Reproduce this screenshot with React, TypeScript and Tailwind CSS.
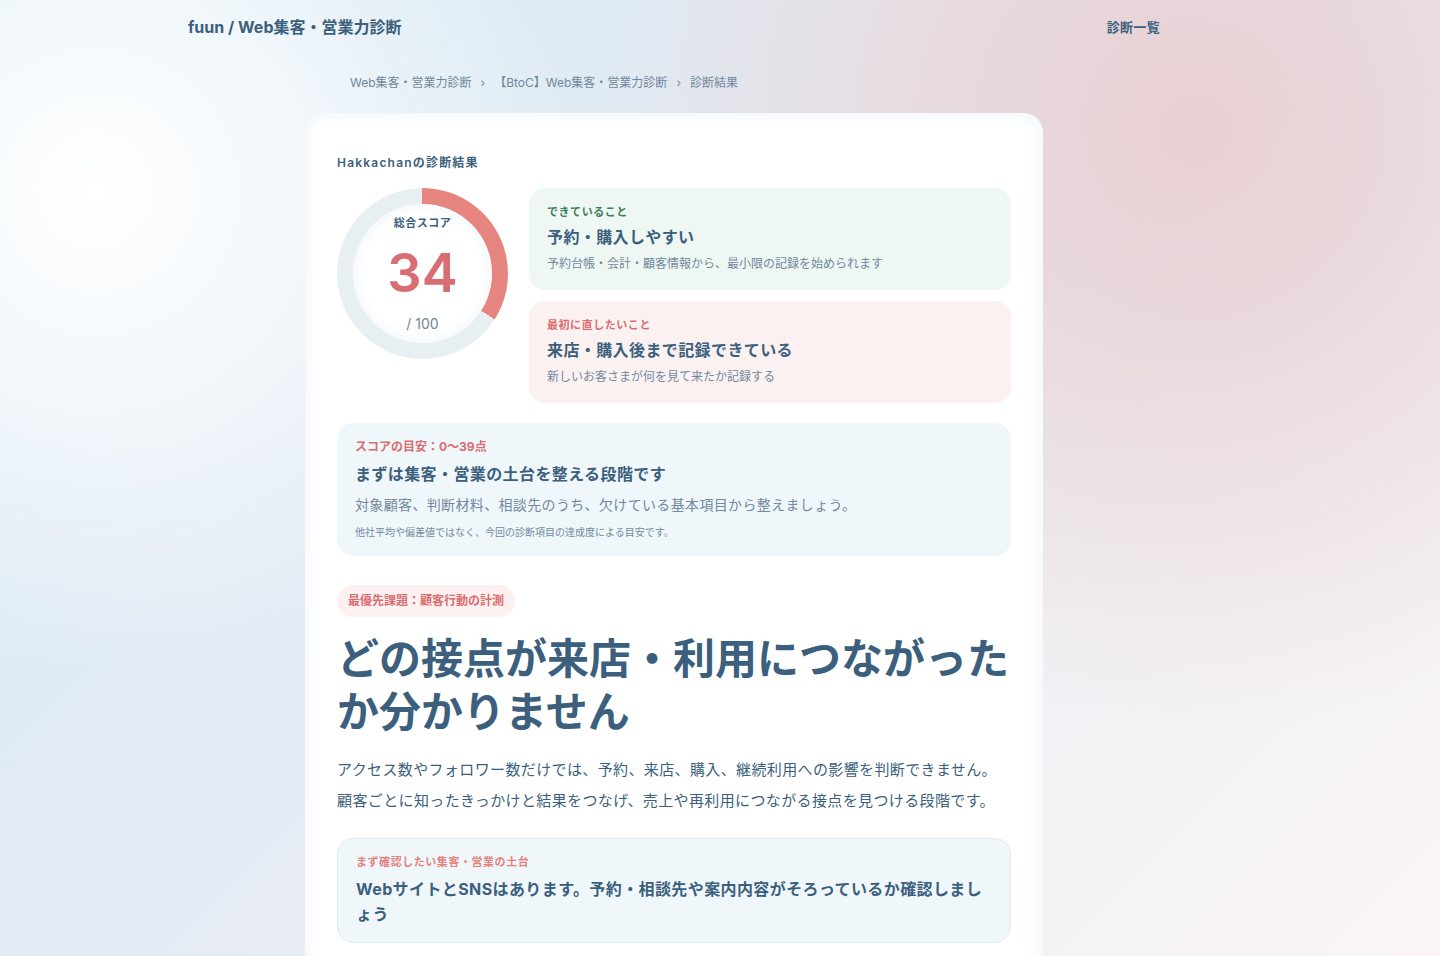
import type { ReactNode } from "react";
import { clsx } from "clsx";

type Tone = "good" | "fix";

const SCORE = 34;

const BREADCRUMBS = [
	{ label: "Web集客・営業力診断", href: "#top" },
	{ label: "【BtoC】Web集客・営業力診断", href: "#btoc" },
];

const HIGHLIGHTS: {
	tone: Tone;
	label: string;
	title: string;
	description: string;
}[] = [
	{
		tone: "good",
		label: "できていること",
		title: "予約・購入しやすい",
		description: "予約台帳・会計・顧客情報から、最小限の記録を始められます",
	},
	{
		tone: "fix",
		label: "最初に直したいこと",
		title: "来店・購入後まで記録できている",
		description: "新しいお客さまが何を見て来たか記録する",
	},
];

export default function App() {
	return (
		<div className="min-h-screen bg-[radial-gradient(circle_at_95px_190px,#ffffff_0%,#ffffffa0_200px,#ffffff00_480px),radial-gradient(circle_at_1195px_130px,#e8d0d3_0%,#e8d2d5c8_200px,#e8d2d500_600px),linear-gradient(135deg,#d8eaf4_0%,#e5ebf4_45%,#f1f1f5_70%,#faf4f5_100%)] pr-[92px] font-['Inter','Noto_Sans_CJK_JP',sans-serif] text-[#3b5f7d]">
			<SiteHeader />
			<main className="mx-auto max-w-[738px]">
				<Breadcrumbs />
				<article className="rounded-[20px] bg-white px-8 pt-10 pb-10 shadow-[inset_0_0_20px_#edf4f9]">
					<p className="text-xs leading-5 font-semibold tracking-widest">
						Hakkachanの診断結果
					</p>
					<div className="mt-[15px] flex items-start gap-[21px]">
						<ScoreRing score={SCORE} />
						<div className="flex flex-1 flex-col gap-[11px]">
							{HIGHLIGHTS.map((item) => (
								<HighlightCard key={item.tone} {...item} />
							))}
						</div>
					</div>

					<section className="mt-5 rounded-2xl bg-[#f0f7fb] px-[18px] py-4">
						<p className="text-xs leading-4 font-bold text-[#d96d70]">
							スコアの目安：0〜39点
						</p>
						<h2 className="mt-1 text-base leading-[30px] font-bold tracking-wide">
							まずは集客・営業の土台を整える段階です
						</h2>
						<p className="mt-1 text-sm leading-6 tracking-wide text-[#7189a0]">
							対象顧客、判断材料、相談先のうち、欠けている基本項目から整えましょう。
						</p>
						<p className="mt-[7px] text-[10px] leading-4 text-[#7189a0]">
							他社平均や偏差値ではなく、今回の診断項目の達成度による目安です。
						</p>
					</section>

					<p className="mt-[29px] w-fit rounded-full bg-[#fdf0f0] px-[11px] py-2 text-xs leading-4 font-bold text-[#d96d70]">
						最優先課題：顧客行動の計測
					</p>
					<h1 className="mt-[15px] text-[42px] leading-[53px] font-bold">
						どの接点が来店・利用につながったか分かりません
					</h1>
					<p className="mt-4 text-[15px] leading-[31px] tracking-wide">
						アクセス数やフォロワー数だけでは、予約、来店、購入、継続利用への影響を判断できません。顧客ごとに知ったきっかけと結果をつなげ、売上や再利用につながる接点を見つける段階です。
					</p>

					<section className="mt-[22px] rounded-2xl border border-[#e0ebf2] bg-[#f0f7fb] px-[18px] py-[15px]">
						<Label className="text-[#e6827e]">
							まず確認したい集客・営業の土台
						</Label>
						<h2 className="mt-[7px] text-base leading-[25px] font-bold tracking-wide">
							WebサイトとSNSはあります。予約・相談先や案内内容がそろっているか確認しましょう
						</h2>
					</section>
				</article>
			</main>
		</div>
	);
}

function SiteHeader() {
	return (
		<header className="mx-auto flex h-[54px] max-w-[972px] items-center justify-between font-bold">
			<a href="#top" className="text-base leading-6">
				fuun / Web集客・営業力診断
			</a>
			<nav className="flex">
				<a href="#list" className="text-[13px] leading-6 tracking-wide">
					診断一覧
				</a>
			</nav>
		</header>
	);
}

function Breadcrumbs() {
	return (
		<nav
			aria-label="パンくず"
			className="mx-[45px] flex h-[59px] items-center gap-[9px] pb-[2px] text-xs text-[#71879b]"
		>
			{BREADCRUMBS.map((item) => (
				<span key={item.href} className="flex items-center gap-[9px]">
					<a href={item.href}>{item.label}</a>
					<span aria-hidden="true">›</span>
				</span>
			))}
			<span aria-current="page">診断結果</span>
		</nav>
	);
}

function Label({
	children,
	className,
}: {
	children: ReactNode;
	className?: string;
}) {
	return (
		<p
			className={clsx(
				"text-[11px] leading-4 font-bold tracking-wider",
				className,
			)}
		>
			{children}
		</p>
	);
}

function ScoreRing({ score }: { score: number }) {
	return (
		<div
			className="size-[171px] shrink-0 rounded-full p-4"
			style={{
				background: `conic-gradient(#e68580 ${score}%, #e8eff3 0)`,
			}}
		>
			<div className="flex size-full flex-col items-center rounded-full bg-white pt-[11px] shadow-[inset_0_0_16px_#edf3f8]">
				<Label>総合スコア</Label>
				<strong className="mt-3 text-[54px] leading-[60px] font-semibold text-[#d96d73]">
					{score}
				</strong>
				<span className="mt-[11px] text-sm leading-5 text-[#71879b]">
					/ 100
				</span>
			</div>
		</div>
	);
}

function HighlightCard({
	tone,
	label,
	title,
	description,
}: (typeof HIGHLIGHTS)[number]) {
	return (
		<section
			className={clsx(
				"rounded-2xl px-[18px] py-4",
				tone === "good" ? "bg-[#eef7f2]" : "bg-[#fcf1f1]",
			)}
		>
			<Label className={tone === "good" ? "text-[#3c7d5d]" : "text-[#d96d70]"}>
				{label}
			</Label>
			<h2 className="mt-[5px] text-base leading-6 font-bold tracking-wide">
				{title}
			</h2>
			<p className="mt-[5px] text-xs leading-5 text-[#7189a0]">
				{description}
			</p>
		</section>
	);
}
